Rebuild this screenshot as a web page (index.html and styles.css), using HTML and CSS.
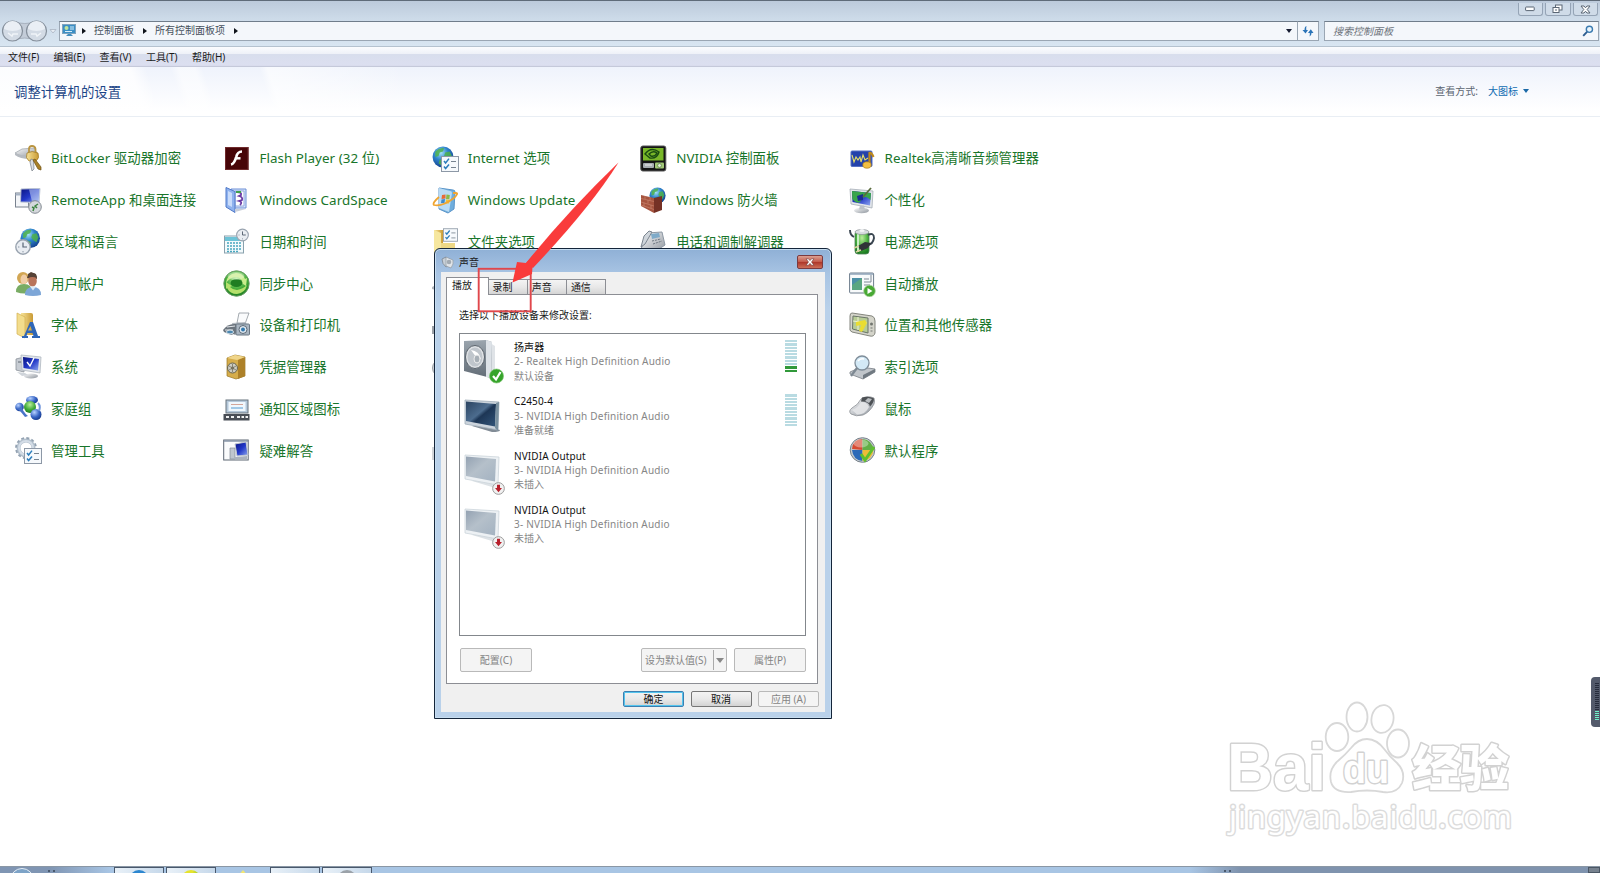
FILE: index.html
```html
<!DOCTYPE html>
<html lang="zh-CN">
<head>
    <meta charset="UTF-8">
    <meta name="viewport" content="width=device-width, initial-scale=1.0">
    <title>所有控制面板项</title>
    <link rel="stylesheet" href="styles.css">
</head>
<body>
    <!-- shared gradients and symbols -->
    <svg class="defs" width="0" height="0">
        <defs>
            <radialGradient id="globe" cx="40%" cy="30%" r="75%"><stop offset="0" stop-color="#a5e4f5"/><stop offset=".45" stop-color="#2e83cc"/><stop offset="1" stop-color="#123d8a"/></radialGradient>
            <linearGradient id="screen" x1="0" y1="0" x2="1" y2="1"><stop offset="0" stop-color="#0a1480"/><stop offset=".5" stop-color="#2238c8"/><stop offset="1" stop-color="#8fa8ee"/></linearGradient>
            <linearGradient id="metal" x1="0" y1="0" x2="1" y2="1"><stop offset="0" stop-color="#fdfdfe"/><stop offset="1" stop-color="#8d949c"/></linearGradient>
            <linearGradient id="gold" x1="0" y1="0" x2="1" y2="0"><stop offset="0" stop-color="#f7e49a"/><stop offset="1" stop-color="#c99a34"/></linearGradient>
            <radialGradient id="green" cx="50%" cy="30%" r="70%"><stop offset="0" stop-color="#b9ee9a"/><stop offset=".6" stop-color="#44ac3a"/><stop offset="1" stop-color="#1c7c22"/></radialGradient>
            <radialGradient id="blueball" cx="35%" cy="30%" r="75%"><stop offset="0" stop-color="#b7d2ff"/><stop offset=".6" stop-color="#3563c4"/><stop offset="1" stop-color="#173a8c"/></radialGradient>
            <linearGradient id="tvon" x1="0" y1="0" x2="1" y2="1"><stop offset="0" stop-color="#2b4461"/><stop offset=".45" stop-color="#4c6c8e"/><stop offset=".55" stop-color="#1d3655"/><stop offset="1" stop-color="#32557a"/></linearGradient>
            <linearGradient id="tvoff" x1="0" y1="0" x2="1" y2="1"><stop offset="0" stop-color="#94a2b2"/><stop offset=".45" stop-color="#b5c0ca"/><stop offset="1" stop-color="#a3b2c1"/></linearGradient>
            <linearGradient id="grey" x1="0" y1="0" x2="0" y2="1"><stop offset="0" stop-color="#9ba5ae"/><stop offset="1" stop-color="#626c76"/></linearGradient>
        </defs>
        <symbol id="s-globe" viewBox="0 0 20 20">
            <circle cx="10" cy="10" r="9.5" fill="url(#globe)"/>
            <path d="M3 5q4-4 8-3l-1 3-3 1-1 3-3 1zM12 6l4-1 2 4-2 5-3-2-2-3zM7 12l4 2-2 4-3-2z" fill="#4fb14a" opacity=".85"/>
        </symbol>
        <symbol id="s-clock" viewBox="0 0 16 16">
            <circle cx="8" cy="8" r="7.2" fill="#e9edf2" stroke="#99a3af" stroke-width="1.4"/>
            <path d="M8 3.6V8h4" fill="none" stroke="#596574" stroke-width="1.2"/>
            <path d="M8 12v1.4M3 8h1.4" stroke="#8b96a4"/>
        </symbol>
        <symbol id="s-list" viewBox="0 0 18 16">
            <rect x=".5" y=".5" width="17" height="15" fill="#f6f9fc" stroke="#8d98a6"/>
            <path d="M3 5l1.6 2L8 2.6M3 10.5l1.6 2L8 8.4" fill="none" stroke="#2c7dbb" stroke-width="1.5"/>
            <path d="M10 5.5h5M10 11.5h5" stroke="#76828f"/>
        </symbol>
        <symbol id="s-unplugged" viewBox="0 0 12 12">
            <circle cx="6" cy="6" r="5.4" fill="#f1f1f1" stroke="#999" stroke-width=".9"/>
            <path d="M4.6 2.6h2.8v3h1.8L6 9.4 2.8 5.6h1.8z" fill="#b8202c"/>
        </symbol>
    </svg>

    <div class="window">
        <div class="titlebar">
            <span class="win-btn"><svg width="10" height="6"><rect x=".6" y="1" width="8.6" height="3.6" rx=".6" fill="#fff" stroke="#5a6674"/></svg></span>
            <span class="win-btn"><svg width="11" height="10"><rect x="3.5" y="1" width="6.5" height="5" fill="#fff" stroke="#5a6674"/><rect x="1" y="3.5" width="6" height="5" fill="#fff" stroke="#5a6674"/><path d="M3 6h2" stroke="#5a6674"/></svg></span>
            <span class="win-btn"><svg width="11" height="9"><path d="M1 1h3l1.5 1.8L7 1h3L7.2 4.5 10 8H7L5.5 6.2 4 8H1l2.8-3.5z" fill="#fff" stroke="#5a6674"/></svg></span>
        </div>

        <div class="navbar">
            <svg class="nav-btns" width="57" height="24" viewBox="0 0 57 24">
                <path d="M13 2.5q12 4 23 0v19q-11-5-23 0z" fill="#c3ccd8" stroke="#a7b1be"/>
                <circle cx="12.5" cy="12" r="10" fill="#d3dbe5" stroke="#858f9b" stroke-width="1.2"/>
                <circle cx="36.5" cy="12" r="10" fill="#d3dbe5" stroke="#858f9b" stroke-width="1.2"/>
                <path d="M4 10a8.5 8 0 0 1 17 0q-8 4-17 0zM28 10a8.5 8 0 0 1 17 0q-8 4-17 0z" fill="#eaeff5"/>
                <path d="M8 14l4 3 1-2h5M41 14l-4 3-1-2h-5" fill="none" stroke="#f0f4f8" stroke-width="1.5"/>
                <path d="M50 10.5h6l-3 3.5z" fill="#e8eef5" stroke="#a9b4c2" stroke-width=".8"/>
            </svg>
            <div class="address">
                <svg class="cp-icon" width="14" height="13" viewBox="0 0 14 13"><rect x=".5" y=".5" width="13" height="9" fill="#3b8fc6" stroke="#7fa4bf"/><circle cx="4.5" cy="4" r="2" fill="#bfe49e"/><path d="M8 3h4M8 5h4M3 7.5h7" stroke="#d9effa"/><path d="M4 12l2-2h3l2 2z" fill="#418cbd"/></svg>
                <span class="tri"></span>
                <span class="crumb">控制面板</span>
                <span class="tri"></span>
                <span class="crumb">所有控制面板项</span>
                <span class="tri"></span>
                <span class="tri-down"></span>
            </div>
            <div class="refresh">
                <svg width="12" height="12" viewBox="0 0 12 12"><path d="M4.500 1Q2.500 1.500 2.500 5H.5L3.500 8.500 6 5H4.300Q4 3 4.500 1zM7.500 11.500Q9.500 11 9.500 8h2L8.800 4.200 6 8h1.800Q8 10 7.500 11.500z" fill="#2b74b8"/></svg>
            </div>
            <div class="search">
                <span>搜索控制面板</span>
                <svg width="12" height="12" viewBox="0 0 12 12"><circle cx="7.4" cy="4.3" r="3.1" fill="#e9f5fc" stroke="#3a7ab0" stroke-width="1.4"/><path d="M5 6.8L1.2 10.8" stroke="#2d5e91" stroke-width="1.9"/></svg>
            </div>
        </div>

        <div class="menubar">
            <span>文件(F)</span><span>编辑(E)</span><span>查看(V)</span><span>工具(T)</span><span>帮助(H)</span>
        </div>

        <div class="header">
            <h1>调整计算机的设置</h1>
            <div class="view-by">查看方式: <a>大图标</a><span class="tri-down"></span></div>
        </div>

        <div class="items">
            <!-- row 1 -->
            <div class="item">
                <svg viewBox="0 0 27 27"><path d="M0 8l7-4 12-1 3 5-7 4-10-1z" fill="url(#metal)" stroke="#9aa0a8" stroke-width=".7"/><path d="M0 8q8 3 15 4v2q-10 0-15-4z" fill="#b5bac0"/><path d="M14 8V4q0-3 3-3t3.500 3v4" fill="none" stroke="#b99440" stroke-width="1.800"/><path d="M12 8q5-3 11 0 2 5-2 8h-7q-4-3-2-8z" fill="url(#gold)" stroke="#9b7320" stroke-width=".7"/><path d="M16 14l-1 3 2 9 2-2-.5-9z" fill="#d9dde2" stroke="#777e86" stroke-width=".7"/><path d="M20 14l6 8v3l-3-1-5-9z" fill="#a98026" stroke="#6f5219" stroke-width=".7"/></svg>
                <span>BitLocker 驱动器加密</span>
            </div>
            <div class="item">
                <svg viewBox="0 0 27 27"><rect x="2" y="2" width="23.5" height="23" fill="#470508"/><rect x="2.5" y="2.5" width="22.5" height="22" fill="none" stroke="#6f2a2c"/><path d="M19 6.5q-4.500 0-5.800 5.500-2 7-5.200 7.500" fill="none" stroke="#fff" stroke-width="2.7"/><path d="M12.500 13.300h5" stroke="#fff" stroke-width="2.5"/></svg>
                <span>Flash Player (32 位)</span>
            </div>
            <div class="item">
                <svg viewBox="0 0 27 27"><use href="#s-globe" x="0" y="1" width="22" height="22"/><use href="#s-list" x="9" y="11" width="18" height="16"/></svg>
                <span>Internet 选项</span>
            </div>
            <div class="item">
                <svg viewBox="0 0 27 27"><rect x=".8" y="1" width="25" height="25" rx="2" fill="#151515" stroke="#555"/><rect x="3" y="3" width="20.5" height="12.5" fill="#79b729"/><path d="M5 9q6-8 14-2-2 7-9 6l-5-4zM9 9q4-4 8-1-2 4-6 3z" fill="none" stroke="#194b12" stroke-width="1.4"/><rect x="3" y="18" width="11" height="5" rx="1" fill="#a8adb2"/><path d="M5 20h7" stroke="#efefef"/><rect x="15" y="17.500" width="9" height="6" rx="1" fill="#a3c977"/><circle cx="19.500" cy="20.500" r="1.900" fill="#e8f0de" stroke="#4d743b" stroke-width=".7"/></svg>
                <span>NVIDIA 控制面板</span>
            </div>
            <div class="item">
                <svg viewBox="0 0 27 27"><rect x="2" y="6" width="21" height="15.5" rx="1" fill="#2342ab" stroke="#5671c4"/><path d="M3 10l2 7 2-5 2 3 2-3 1 5 2-7 2 5 3-2" fill="none" stroke="#e3dd69" stroke-width="1.1"/><path d="M20.500 19V8q2-1 4 4" fill="none" stroke="#c08a1c" stroke-width="2.2"/><ellipse cx="18" cy="20" rx="4.2" ry="3.2" fill="#f2bf43" stroke="#ad7d17" stroke-width=".7"/></svg>
                <span>Realtek高清晰音频管理器</span>
            </div>

            <!-- row 2 -->
            <div class="item">
                <svg viewBox="0 0 27 27"><rect x=".5" y="6" width="13" height="14" fill="#f3f5f8" stroke="#79828f"/><path d="M.5 7.500h12" stroke="#a7b3c4" stroke-width="2"/><path d="M6 2l19-.5-1 14L5.500 15z" fill="url(#screen)" stroke="#bcc5d4"/><path d="M14 2.500l11-.5-1 13-7-.5z" fill="#cbd8f5" opacity=".55"/><circle cx="20" cy="20" r="6.3" fill="#d5d8dc" stroke="#858c94"/><path d="M17 20l2 1-1 3M23 17l-3 2 2 2" fill="none" stroke="#3d8440" stroke-width="1.5"/></svg>
                <span>RemoteApp 和桌面连接</span>
            </div>
            <div class="item">
                <svg viewBox="0 0 27 27"><path d="M8 2h15v19H8z" fill="#d6e4fa" stroke="#6c8fd6"/><path d="M12 4h9v15h-9z" fill="#fff" stroke="#90a8de"/><path d="M14 5q5 0 4 3l-2 1q4 1 3 4l-3 1q4 1 1 4" fill="none" stroke="#6b3ba5" stroke-width="1.800"/><path d="M13 5h5" stroke="#3da04a" stroke-width="2"/><path d="M3 .5l9 4v21L3 20z" fill="#8fb2ee" stroke="#4f78c8"/><path d="M5 4l4 2v14l-4-2z" fill="#c9dcfb"/><path d="M12 22h11l-11 3z" fill="#c9cfda"/></svg>
                <span>Windows CardSpace</span>
            </div>
            <div class="item">
                <svg viewBox="0 0 27 27"><path d="M7 1l14 2q2 0 2 2l-1 17-6 4-9-4z" fill="#70aedd" stroke="#5b95c9"/><path d="M7 1l11 3q2 0 2 2l-3 19-10-4z" fill="#b9dbf4"/><path d="M10 8l3.500-.5v4l-4 .5z" fill="#e86a36"/><path d="M14.500 7.500l3.300.5-.5 4h-3.300z" fill="#8cb945"/><path d="M9.500 12.500l3.500-.5-.5 4H9z" fill="#3e8acb"/><path d="M14 12.500h3.500l-.5 4h-3.300z" fill="#efc53a"/><path d="M7 10q-7 6-5 8 8 2 20-7 5-5 2-5h-3" fill="none" stroke="#efa532" stroke-width="1.800"/></svg>
                <span>Windows Update</span>
            </div>
            <div class="item">
                <svg viewBox="0 0 27 27"><use href="#s-globe" x="9" y="0" width="17" height="17"/><path d="M1 8l13 3v15L1 19z" fill="#a6543f"/><path d="M14 11l8-2v14l-8 3z" fill="#753125"/><path d="M1 11.500l13 3M1 15l13 4M1 18l13 4.500M5 9v3M10 10v3.500M8 13v3.500M4 15.500v4M11 18v3.500" fill="none" stroke="#cc8974" stroke-width=".6"/></svg>
                <span>Windows 防火墙</span>
            </div>
            <div class="item">
                <svg viewBox="0 0 27 27"><path d="M1 2l23 2-1 17-21-4z" fill="#e2e6ea" stroke="#a7aeb7" stroke-width=".8"/><path d="M3 4l19 2-1 12.500L3.500 15z" fill="url(#screen)"/><path d="M3 4l19 2-.5 7q-6-6-9 0T3.300 12z" fill="#38a54a"/><path d="M8 9l6-2v6l-5 1z" fill="#1c2c93"/><path d="M22 1l-8 9" stroke="#5a6b3c" stroke-width="1.8"/><ellipse cx="12.5" cy="23.5" rx="7.5" ry="2.8" fill="url(#metal)"/><path d="M11 18.500h4l1 4h-6z" fill="#bcc2c9"/></svg>
                <span>个性化</span>
            </div>

            <!-- row 3 -->
            <div class="item">
                <svg viewBox="0 0 27 27"><use href="#s-globe" x="5" y="0" width="20.5" height="20.5"/><use href="#s-clock" x="0" y="11" width="16" height="16"/></svg>
                <span>区域和语言</span>
            </div>
            <div class="item">
                <svg viewBox="0 0 27 27"><rect x="1.5" y="8" width="19" height="17" fill="#f3fafc" stroke="#89a1ad"/><path d="M2 9h18v4H2z" fill="#6dc3d7"/><path d="M4 15h15M4 18h15M4 21h15M4 23.500h12" stroke="#48a7bf" stroke-width="1.6" stroke-dasharray="2 1"/><use href="#s-clock" x="13" y="0" width="13" height="14"/></svg>
                <span>日期和时间</span>
            </div>
            <div class="item">
                <svg viewBox="0 0 27 27"><path d="M2 2h9v25H2z" fill="url(#gold)"/><path d="M2 2l7 3v22H2z" fill="#f6e79f"/><use href="#s-list" x="11" y="0" width="15" height="14"/><path d="M9 15h14v11H9z" fill="#edd887"/></svg>
                <span>文件夹选项</span>
            </div>
            <div class="item">
                <svg viewBox="0 0 27 27"><path d="M7 5l15-1 3 13-12 8-12-4z" fill="url(#metal)" stroke="#8d98a4"/><path d="M11 6l8-1 1 4-8 2z" fill="#7fabc9"/><path d="M4 8l5-5 3 1-7 12-4 3z" fill="#cfd5db" stroke="#7b858f"/><path d="M12 13l9-2M13 16l9-3" stroke="#6e7882" stroke-dasharray="2 1"/></svg>
                <span>电话和调制解调器</span>
            </div>
            <div class="item">
                <svg viewBox="0 0 27 27"><rect x="6" y="3" width="14" height="23" rx="3" fill="url(#green)" stroke="#4e8455" stroke-width=".8"/><path d="M9 6v18" stroke="#c9efc5" stroke-width="2"/><ellipse cx="13" cy="4" rx="7" ry="2.5" fill="#d9dde0" stroke="#8c9296" stroke-width=".7"/><ellipse cx="13" cy="2.5" rx="2.5" ry="1.5" fill="#f2f4f5"/><path d="M1 2q0 5 4 7M19 7q6-3 6 3-1 6-6 7" fill="none" stroke="#394550" stroke-width="1.9"/><path d="M9 18l7-4 6 1-3 5-7 3z" fill="#303438"/><path d="M10 18l-5 2M12 22l-5 2" stroke="#d8d09d" stroke-width="1.5"/></svg>
                <span>电源选项</span>
            </div>

            <!-- row 4 -->
            <div class="item">
                <svg viewBox="0 0 27 27"><circle cx="8" cy="8" r="6" fill="#d2a654"/><ellipse cx="9" cy="9.5" rx="3.5" ry="5" fill="#f0cda6"/><path d="M1 22q0-8 8-8t8 8q-7 3-16 0z" fill="#79ac64"/><path d="M12 8q1-5 5.500-5T22 9z" fill="#5a4334"/><ellipse cx="17.5" cy="11" rx="4.3" ry="5.5" fill="#b9745a"/><path d="M13 8q4-2 9 0l-1-4-5-2-3 2z" fill="#564237"/><path d="M10 25q0-8 8-8 8 0 8 8-8 2-16 0z" fill="#7da6d7"/><path d="M15 16.500l3 4 3-4" fill="#dce9f6"/></svg>
                <span>用户帐户</span>
            </div>
            <div class="item">
                <svg viewBox="0 0 27 27"><circle cx="13.5" cy="13.5" r="12.7" fill="url(#green)" stroke="#6d9e68"/><path d="M3 13q1-9 10-10 7 0 9 6l2-1-1 8-6-4 2-1q-2-4-6-4-6 0-10 6z" fill="#c9ec8c"/><path d="M24 15q-2 8-10 9-7 0-10-6l-1 1v-7l6 4-2 1q3 3 7 3 6-1 10-5z" fill="#b5e06c"/><ellipse cx="13.5" cy="13" rx="6" ry="4" fill="#1f7d22"/><ellipse cx="13" cy="6" rx="8.500" ry="4" fill="#fff" opacity=".3"/></svg>
                <span>同步中心</span>
            </div>
            <div class="item"><svg viewBox="0 0 27 27"><path d="M0 17l8-4v8l-8-2z" fill="#b5b9be"/></svg></div>
            <div class="item"></div>
            <div class="item">
                <svg viewBox="0 0 27 27"><rect x=".6" y="3" width="24" height="20" rx="1" fill="#f8fafb" stroke="#6d7c8c"/><path d="M1 4h23" stroke="#8fa3b8" stroke-width="1.5"/><path d="M3 8h10v12H3z" fill="#4b8fa6"/><path d="M3 15l10-7v12H3z" fill="#5aa680"/><path d="M15 9h5M15 12h7M15 15h6M22 5v7" stroke="#7e8a96"/><circle cx="20.5" cy="21" r="5.8" fill="#48a934" stroke="#a6cf98" stroke-width=".7"/><path d="M18.500 18l5 3-5 3z" fill="#fff"/></svg>
                <span>自动播放</span>
            </div>

            <!-- row 5 -->
            <div class="item">
                <svg viewBox="0 0 27 27"><path d="M6 1h10q2 0 2 2v20H6z" fill="url(#gold)"/><path d="M2 1l8 4v21l-8-4z" fill="#f3dd8d" stroke="#d2b050" stroke-width=".7"/><path d="M7 26v-2h2l6-14h3l5 14h2v2h-8v-2h1.500l-1-3h-5l-1 3H13v2zM13 18.500h4L15.500 14z" fill="#2f66b7" fill-rule="evenodd"/></svg>
                <span>字体</span>
            </div>
            <div class="item">
                <svg viewBox="0 0 27 27"><path d="M14 11l2-10h10l-4 11z" fill="#fafbfc" stroke="#8e959c" stroke-width=".8"/><path d="M9 11l14-1 2 11-14 2z" fill="#b1b8bf"/><path d="M0 18q5-7 13-6l1 9-6 2-7-3z" fill="#6b747d"/><path d="M4 15l8-1M2 18h8" stroke="#e2e6ea"/><rect x="13" y="12" width="13.500" height="11" rx="1" fill="#a9b5c1" stroke="#6b7884"/><circle cx="20" cy="17.5" r="4" fill="#e0e9f1" stroke="#5d6a76"/><circle cx="20" cy="17.5" r="2" fill="#3279ae"/><ellipse cx="7" cy="20" rx="3.500" ry="2" fill="#4d88b0" stroke="#dfe6eb"/></svg>
                <span>设备和打印机</span>
            </div>
            <div class="item"><svg viewBox="0 0 27 27"><path d="M0 14h10v8H0z" fill="#9da2a8"/></svg></div>
            <div class="item"></div>
            <div class="item">
                <svg viewBox="0 0 27 27"><path d="M3 1l20 3q3 1 3 5v12q-1 4-5 3L3 20q-3-1-2-5V4q0-3 2-3z" fill="#d4d4ca" stroke="#84867e"/><path d="M4 4l15 2v15L3.500 17z" fill="#b7cc96" stroke="#6a7569"/><path d="M4 9l14 2M9 5v13" stroke="#eff3d5"/><path d="M7 10l9-2 2 3-5 9-3-1 2-6-5 1z" fill="#e9dd32"/><circle cx="22.5" cy="12" r="1.5" fill="#727670"/><path d="M21.500 16h2M21.500 19h2" stroke="#727670"/></svg>
                <span>位置和其他传感器</span>
            </div>

            <!-- row 6 -->
            <div class="item">
                <svg viewBox="0 0 27 27"><path d="M1 5l8-2v15l-8-2z" fill="#c7ccd3" stroke="#8b929b" stroke-width=".8"/><path d="M3 8h4" stroke="#5f6873"/><path d="M6 1l20 2-1 16-18-3z" fill="#e2e6eb" stroke="#b0b7c0" stroke-width=".8"/><path d="M8 3l16 2-1 11.500L8.500 14z" fill="url(#screen)"/><path d="M12 8l3 4 4-8" fill="none" stroke="#fff" stroke-width="1.4"/><ellipse cx="16" cy="22" rx="7" ry="2.5" fill="url(#metal)"/><path d="M2 18l8 1 3 2-6 1z" fill="#cfd4da"/></svg>
                <span>系统</span>
            </div>
            <div class="item">
                <svg viewBox="0 0 27 27"><path d="M4 4l8-3 10 2v19l-9 3-9-3z" fill="#d6ad4b" stroke="#9a7524" stroke-width=".7"/><path d="M15 6l7-3v19l-7 3z" fill="#ad8129"/><path d="M4 4l8-3 10 2-8 3z" fill="#f0d589"/><circle cx="9.5" cy="14" r="5" fill="#cbcbc3" stroke="#676451"/><circle cx="9.5" cy="14" r="1.6" fill="#625f51"/><path d="M9.500 10v8M6 12l7 4M6 16l7-4" stroke="#777361" stroke-width=".8"/></svg>
                <span>凭据管理器</span>
            </div>
            <div class="item"><svg viewBox="0 0 27 27"><circle cx="9" cy="14" r="8.500" fill="#d5d8db" stroke="#999fa5"/></svg></div>
            <div class="item"></div>
            <div class="item">
                <svg viewBox="0 0 27 27"><path d="M1 18l11-5 14 2v3l-12 7-13-5z" fill="#c0c5ca" stroke="#777e85" stroke-width=".8"/><path d="M14 21l12-6v3l-12 7z" fill="#707981"/><circle cx="13" cy="9" r="7" fill="#d3e9f6" stroke="#7f8d99" stroke-width="1.3"/><path d="M9 7q2-3 6-2" stroke="#fff" stroke-width="1.5" fill="none"/><path d="M8 14l-6 8" stroke="#7d8892" stroke-width="2.2"/></svg>
                <span>索引选项</span>
            </div>

            <!-- row 7 -->
            <div class="item">
                <svg viewBox="0 0 27 27"><ellipse cx="17" cy="5" rx="6" ry="4" fill="url(#blueball)"/><circle cx="4.5" cy="12" r="4.3" fill="url(#blueball)"/><path d="M3 14q4 4 7 8l3-1q-6-5-6-10z" fill="#4a74c8"/><circle cx="15" cy="12" r="6" fill="url(#green)"/><circle cx="21" cy="19.5" r="5.5" fill="url(#blueball)"/><path d="M23 8q3 3 1 8" stroke="#7196dc" stroke-width="2" fill="none"/></svg>
                <span>家庭组</span>
            </div>
            <div class="item">
                <svg viewBox="0 0 27 27"><rect x="3" y="5" width="22" height="13" fill="#b5c8da" stroke="#69747f"/><rect x="5.5" y="7" width="17" height="9" fill="#eff7fd"/><path d="M8 9.500h12" stroke="#d3a69a"/><path d="M8 13h12" stroke="#5599cf"/><rect x=".5" y="19" width="26" height="6.5" fill="#494e56"/><path d="M3 22h3M8 22h3M14 22h3M18.500 22h2.500M22.500 22h2.500" stroke="#f0f1f2" stroke-width="2.2"/></svg>
                <span>通知区域图标</span>
            </div>
            <div class="item"></div>
            <div class="item"></div>
            <div class="item">
                <svg viewBox="0 0 27 27"><path d="M12 4q6-4 13-1 1 3 0 6-4 8-11 11-7 2-12-1-3-3 1-6 6-3 9-9z" fill="url(#metal)" stroke="#8b8f94" stroke-width=".8"/><path d="M13 2.500q7-2 12 1 0 4-4 8-1-5-9-5z" fill="#4d5155"/><path d="M19 3l4 1-3 4-4-2z" fill="#b9bdc1"/><path d="M3 15q7-3 9-8 6 0 8 5-4 8-12 7.500z" fill="#e4e6e8" opacity=".9"/></svg>
                <span>鼠标</span>
            </div>

            <!-- row 8 -->
            <div class="item">
                <svg viewBox="0 0 27 27"><circle cx="11" cy="11" r="7.500" fill="none" stroke="#b3c0cd" stroke-width="4"/><circle cx="11" cy="11" r="10" fill="none" stroke="#93a2b2" stroke-width="1.800" stroke-dasharray="3 2.240"/><circle cx="11" cy="11" r="7" fill="none" stroke="#d4dde7" stroke-width="2"/><use href="#s-list" x="9" y="11" width="18" height="16"/></svg>
                <span>管理工具</span>
            </div>
            <div class="item">
                <svg viewBox="0 0 27 27"><rect x=".7" y="3" width="24.5" height="20" fill="#fafbfc" stroke="#5d6773"/><path d="M1 4h24" stroke="#8796a8" stroke-width="1.5"/><path d="M7 11h5v11H7z" fill="#bfc6ce" stroke="#838b95" stroke-width=".7"/><path d="M12 7l11-2 2 13-11 1z" fill="url(#screen)" stroke="#c1c8d1"/><path d="M12 20l12-1v3H10z" fill="#aab2bd"/></svg>
                <span>疑难解答</span>
            </div>
            <div class="item"><svg viewBox="0 0 27 27"><path d="M0 10h10v13H0z" fill="#d2d5d9"/></svg></div>
            <div class="item"></div>
            <div class="item">
                <svg viewBox="0 0 27 27"><circle cx="13.5" cy="13" r="12.3" fill="#c4cace" stroke="#77828b"/><path d="M13.500 13V2Q4 2 3 12z" fill="#d64a32"/><path d="M13.500 13V2q10 1 11 11z" fill="#62b046"/><path d="M13.500 13H3q1 10 10.500 11z" fill="#2c6ab8"/><path d="M13.500 13h11q-1 10-11 11z" fill="#eebd37"/><ellipse cx="12" cy="6.5" rx="7.5" ry="4" fill="#fff" opacity=".35"/><path d="M12 17l4 6 9-13" fill="none" stroke="#5fc02d" stroke-width="3"/></svg>
                <span>默认程序</span>
            </div>
        </div>
    </div>

    <!-- watermark -->
    <svg class="watermark" width="300" height="150" viewBox="0 0 300 150">
        <g fill="#fff" stroke="#d8d8d8" stroke-width="1.8">
            <ellipse cx="117" cy="37" rx="11.3" ry="14"/>
            <ellipse cx="137" cy="17" rx="10.5" ry="14.5"/>
            <ellipse cx="162.5" cy="19" rx="11" ry="14" transform="rotate(10 162.5 19)"/>
            <ellipse cx="178" cy="43.5" rx="11" ry="14"/>
            <path d="M147 39q10 0 18 11 5 7 12 13 9 9 5 20-5 11-19 9-16-3-32 0-17 1-20-10-3-13 8-22 6-5 12-12 7-9 16-9z"/>
        </g>
        <text class="wm-bai" x="7" y="90" textLength="99" lengthAdjust="spacingAndGlyphs">Bai</text>
        <text class="wm-du" x="123" y="83" textLength="46" lengthAdjust="spacingAndGlyphs">du</text>
        <text class="wm-cn" x="192" y="86" textLength="97">经验</text>
        <text class="wm-url" x="9" y="128" textLength="283">jingyan.baidu.com</text>
    </svg>

    <!-- sound dialog -->
    <div class="dialog">
        <div class="dialog-title">
            <svg width="14" height="14" viewBox="0 0 14 14"><path d="M1 4l4-2 3 8-3 2q-4-3-4-8z" fill="#c8cfd6" stroke="#7b8590" stroke-width=".8"/><path d="M5 2l7 3q1 4-2 8L5 11z" fill="#e1e5e9" stroke="#8e98a2" stroke-width=".7"/><circle cx="8" cy="7" r="2.3" fill="#a3abb3"/></svg>
            <span>声音</span>
            <span class="dialog-close"><svg width="10" height="8" viewBox="0 0 10 8"><path d="M1 .8h2.500L5 2.600 6.500.8H9L6.500 4 9 7.200H6.500L5 5.400 3.500 7.200H1L3.500 4z" fill="#fff" stroke="#6c3433" stroke-width=".6"/></svg></span>
        </div>
        <div class="dialog-body">
            <div class="tabs">
                <span class="tab active">播放</span><span class="tab">录制</span><span class="tab">声音</span><span class="tab">通信</span>
            </div>
            <div class="panel">
                <p class="hint">选择以下播放设备来修改设置:</p>
                <div class="devices">
                    <div class="device">
                        <svg width="44" height="46" viewBox="0 0 44 46"><path d="M27 5l5 3v28l-5 4z" fill="#dfe3e7"/><path d="M1 3l22-1 6 2-1 36L1 33z" fill="url(#grey)"/><path d="M23 2l6 2-1 36-5-1z" fill="#dde2e7"/><ellipse cx="12" cy="19" rx="9.5" ry="11.5" fill="#dfe2e5" stroke="#59626b"/><ellipse cx="12" cy="19" rx="7.5" ry="9.5" fill="#c0c6cc"/><path d="M8 12q8 1 10 9l-5-2z" fill="#fff"/><ellipse cx="14" cy="21" rx="3" ry="4" fill="#a8b0b7" stroke="#eee"/><circle cx="33.5" cy="38" r="7" fill="#36a42b" stroke="#7ac46d" stroke-width=".7"/><path d="M30 38l3 3.500 4.500-7.500" fill="none" stroke="#fff" stroke-width="2.2"/></svg>
                        <div class="device-text"><b>扬声器</b><span class="driver">2- Realtek High Definition Audio</span><span>默认设备</span></div>
                        <div class="meter"><i></i><i></i><i></i><i></i><i></i><i></i><i></i><i></i><i class="on"></i><i class="on"></i></div>
                    </div>
                    <div class="device">
                        <svg width="44" height="46" viewBox="0 0 44 46"><path d="M9 34l20 6q8 0 8-2L18 33z" fill="#818b95"/><path d="M2 8l34 2-1 28L2 32z" fill="#ccd4dc" stroke="#9fadb9" stroke-width=".8"/><path d="M3 9.500l30 2.500-1 22.500L3 29z" fill="url(#tvon)"/><path d="M33 11l3-1-1 29-3-3z" fill="#79909f"/></svg>
                        <div class="device-text"><b>C2450-4</b><span class="driver">3- NVIDIA High Definition Audio</span><span>准备就绪</span></div>
                        <div class="meter"><i></i><i></i><i></i><i></i><i></i><i></i><i></i><i></i><i></i><i></i></div>
                    </div>
                    <div class="device">
                        <svg width="44" height="46" viewBox="0 0 44 46"><path d="M9 34l20 6q8 0 8-2L18 33z" fill="#dde2e6"/><path d="M2 8l34 2-1 28L2 32z" fill="#edf1f4" stroke="#ccd4da" stroke-width=".8"/><path d="M3 9.500l30 2.500-1 22.500L3 29z" fill="url(#tvoff)"/><use href="#s-unplugged" x="29" y="35" width="13" height="13"/></svg>
                        <div class="device-text"><b>NVIDIA Output</b><span class="driver">3- NVIDIA High Definition Audio</span><span>未插入</span></div>
                    </div>
                    <div class="device">
                        <svg width="44" height="46" viewBox="0 0 44 46"><path d="M9 34l20 6q8 0 8-2L18 33z" fill="#dde2e6"/><path d="M2 8l34 2-1 28L2 32z" fill="#edf1f4" stroke="#ccd4da" stroke-width=".8"/><path d="M3 9.500l30 2.500-1 22.500L3 29z" fill="url(#tvoff)"/><use href="#s-unplugged" x="29" y="35" width="13" height="13"/></svg>
                        <div class="device-text"><b>NVIDIA Output</b><span class="driver">3- NVIDIA High Definition Audio</span><span>未插入</span></div>
                    </div>
                </div>
                <div class="panel-actions">
                    <span class="btn disabled">配置(C)</span>
                    <span class="btn disabled split">设为默认值(S)<span class="split-arrow"></span></span>
                    <span class="btn disabled">属性(P)</span>
                </div>
            </div>
            <div class="dialog-actions">
                <span class="btn primary">确定</span>
                <span class="btn">取消</span>
                <span class="btn disabled">应用 (A)</span>
            </div>
        </div>
    </div>

    <!-- red marker and arrow -->
    <svg class="marker" width="160" height="170" viewBox="470 150 160 170">
        <rect x="478.7" y="268.8" width="52" height="42.5" fill="none" stroke="#e0474c" stroke-width="1.9"/>
        <path d="M618.500 162.500L526 263l-9-1-4.500 20.500 19.500-8.500.5-7z" fill="#f93b3b"/>
        <path d="M618.500 162.500Q590 208 533 268l-7-5q42-52 92.500-100.500z" fill="#f93b3b"/>
    </svg>

    <div class="gadget"><i></i></div>

    <div class="taskbar">
        <span class="start-orb"></span>
        <span class="grip"></span>
        <span class="task"><i class="dot blue"></i></span>
        <span class="task"><i class="dot lime"></i></span>
        <span class="task plain"><i class="peak"></i></span>
        <span class="task"></span>
        <span class="task"><i class="dot grey"></i></span>
        <span class="tray"><i class="grip-mark"></i></span>
        <span class="show-desktop"></span>
    </div>
</body>
</html>
```

FILE: styles.css
```css
* {
    margin: 0;
    padding: 0;
    box-sizing: border-box;
}
body {
    width: 1600px;
    height: 873px;
    overflow: hidden;
    position: relative;
    background: #fff;
    font-family: 'Noto Sans', 'Noto Sans CJK SC', sans-serif;
    font-size: 10px;
    line-height: 14px;
    color: #1b1b1b;
}
.defs {
    position: absolute;
}
.window {
    height: 866px;
}

/* title bar */
.titlebar {
    height: 19px;
    padding: 2px 2px 0 0;
    border-top: 1px solid #5f6b79;
    background: linear-gradient(#bccadb, #cddbe9);
    display: flex;
    justify-content: flex-end;
    gap: 2px;
}
.win-btn {
    width: 25.5px;
    height: 13px;
    border: 1px solid #95a4b6;
    border-top: none;
    border-radius: 0 0 3px 3px;
    background: #cfdbe8;
    display: flex;
    align-items: center;
    justify-content: center;
}

/* address and search */
.navbar {
    height: 28px;
    background: linear-gradient(#cddbe9, #d8e5f1);
    border-bottom: 1px solid #b5c2cf;
    display: flex;
    align-items: center;
    padding-bottom: 4px;
}
.nav-btns {
    margin: 1px 2px 0 0;
}
.address, .refresh, .search {
    height: 20px;
    border: 1px solid #9aa6b3;
    border-top-color: #707d8b;
    background: #f4f7fb;
    display: flex;
    align-items: center;
}
.address {
    width: 1239px;
    padding: 0 5px 0 2px;
    color: #46505c;
}
.crumb {
    margin: 0 9px 1px 8px;
}
.cp-icon {
    margin-right: 6px;
}
.tri {
    border-left: 4px solid #10141a;
    border-top: 3px solid transparent;
    border-bottom: 3px solid transparent;
}
.tri-down {
    border-top: 4px solid #151b30;
    border-left: 3px solid transparent;
    border-right: 3px solid transparent;
    margin-left: auto;
}
.refresh {
    width: 21px;
    border-left: none;
    justify-content: center;
}
.search {
    width: 275px;
    margin-left: 5px;
    padding: 0 4px 0 8px;
    justify-content: space-between;
    color: #6e747b;
    font-style: italic;
}

/* menu */
.menubar {
    height: 20px;
    padding-left: 8px;
    display: flex;
    align-items: center;
    gap: 14.4px;
    background: linear-gradient(#fbfcfe 0, #eef1f8 34%, #d8deed 36%, #dcdff0 92%, #c5c9da 96%);
}

/* page header */
.header {
    height: 50px;
    padding: 0 71px 2px 14px;
    display: flex;
    align-items: center;
    justify-content: space-between;
    background: linear-gradient(72deg, rgba(255,255,255,.8) 0 9%, transparent 10% 11.5%, rgba(255,255,255,.5) 12% 13%, transparent 13.500% 17%, rgba(255,255,255,.6) 17.500%, transparent 26%), linear-gradient(#eff3fc, #fff 90%);
    border-bottom: 1px solid #e9eef4;
}
.header h1 {
    font-size: 13.4px;
    font-weight: normal;
    color: #1c4587;
    padding-top: 2px;
}
.view-by {
    display: flex;
    align-items: center;
    color: #5a6470;
}
.view-by a {
    color: #0f6cb2;
    margin-left: 10px;
}
.view-by .tri-down {
    border-top-color: #1a69a7;
    margin-left: 5px;
}

/* control panel items */
.items {
    display: grid;
    grid-template-columns: repeat(5, 208.4px);
    grid-auto-rows: 41.75px;
    padding: 20.5px 0 0 15px;
}
.item {
    display: flex;
    align-items: center;
    gap: 9px;
    white-space: nowrap;
    font-size: 13.4px;
    letter-spacing: .06px;
    line-height: 20px;
    color: #18752a;
}
.item svg {
    width: 27px;
    height: 27px;
    flex: none;
}

/* dialog */
.dialog {
    position: absolute;
    left: 434px;
    top: 248px;
    width: 398px;
    height: 471px;
    padding: 0 6px 6px;
    border: 1px solid #14253a;
    border-radius: 6px 6px 0 0;
    background: linear-gradient(#8fb0d6, #a9c5e4 26px, #b9d1ea 60px);
    box-shadow: inset 0 0 0 1px #c7ddf0;
    display: flex;
    flex-direction: column;
}
.dialog-title {
    height: 23px;
    display: flex;
    align-items: center;
    gap: 4px;
    padding-top: 3px;
}
.dialog-close {
    width: 26px;
    height: 14px;
    margin: -1px 2px 0 auto;
    border: 1px solid #7b3a3f;
    border-radius: 2px;
    background: linear-gradient(#dba092, #c45a4b 48%, #ad3629 52%, #cc6e58);
    display: flex;
    align-items: center;
    justify-content: center;
}
.dialog-body {
    flex: 1;
    background: #f0f0f0;
    padding: 5px 7px 0 5px;
    display: flex;
    flex-direction: column;
}
.tabs {
    height: 18px;
    display: flex;
    align-items: flex-end;
    position: relative;
    margin-bottom: -1px;
    z-index: 1;
}
.tab {
    width: 39.2px;
    height: 16px;
    padding-left: 4px;
    border: 1px solid #8c8e94;
    border-left: none;
    background: linear-gradient(#f4f4f4, #e8e8e8 50%, #d5d5d5);
}
.tab.active {
    width: 42.5px;
    height: 18px;
    padding: 0 0 0 5px;
    border-left: 1px solid #8c8e94;
    border-bottom: none;
    background: #fff;
}
.panel {
    height: 390px;
    border: 1px solid #8c8e94;
    background: #fff;
    padding: 13px 11px 0 12px;
}
.hint {
    height: 25px;
}
.devices {
    height: 303px;
    border: 1px solid #83878c;
    padding: 4px 8px 0 3px;
}
.device {
    height: 54.3px;
    display: flex;
}
.device svg {
    overflow: visible;
}
.device-text {
    display: flex;
    flex-direction: column;
    padding: 2px 0 0 7px;
    color: #868686;
    line-height: 14.3px;
}
.device-text b {
    font-weight: normal;
    letter-spacing: .12px;
    color: #111;
}
.driver {
    letter-spacing: .21px;
}
.meter {
    width: 12px;
    margin: 2px 0 0 auto;
}
.meter i {
    display: block;
    height: 2.3px;
    margin-bottom: 1px;
    background: #b9dbe2;
}
.meter .on {
    background: #31993a;
}
.panel-actions {
    display: flex;
    gap: 7px;
    padding: 12px 0 0 1px;
}
.panel-actions .btn {
    width: 72px;
    height: 24px;
}
.panel-actions .btn.split {
    width: 86px;
    margin-left: auto;
    padding-left: 3px;
    justify-content: flex-start;
}
.split-arrow {
    width: 13px;
    height: 20px;
    margin-left: auto;
    border-left: 1px solid #aaa;
    display: flex;
    align-items: center;
    justify-content: center;
}
.split-arrow::before {
    content: '';
    border-top: 5px solid #888;
    border-left: 4.5px solid transparent;
    border-right: 4.5px solid transparent;
}
.btn {
    width: 61px;
    height: 16px;
    border: 1px solid #777;
    border-radius: 2px;
    background: linear-gradient(#f3f3f3, #e9e9e9 50%, #d3d3d3);
    display: flex;
    align-items: center;
    justify-content: center;
    color: #111;
    white-space: nowrap;
}
.btn.primary {
    border-color: #3c7fb1;
    box-shadow: inset 0 0 0 1px #54c5ee;
}
.btn.disabled {
    border-color: #b9b9b9;
    background: #f4f4f4;
    color: #858585;
}
.dialog-actions {
    display: flex;
    justify-content: flex-end;
    gap: 6.5px;
    padding-top: 7px;
    margin-right: -1px;
}

/* overlays */
.marker {
    position: absolute;
    left: 470px;
    top: 150px;
    z-index: 2;
}
.watermark {
    position: absolute;
    left: 1220px;
    top: 700px;
}
.watermark text {
    fill: #fff;
    stroke: #d2d2d2;
    stroke-width: 3px;
    stroke-linejoin: round;
    paint-order: stroke;
    font-family: 'Liberation Sans', 'Noto Sans CJK SC', sans-serif;
}
.watermark .wm-bai {
    font-size: 66px;
    font-weight: bold;
}
.watermark .wm-du {
    font-size: 40px;
    font-weight: bold;
}
.watermark .wm-cn {
    font-size: 49px;
    font-weight: 900;
}
.watermark .wm-url {
    font-family: 'Noto Sans', sans-serif;
    font-size: 31px;
    stroke: #dcdcdc;
}
.gadget {
    position: absolute;
    right: 0;
    top: 677px;
    width: 9px;
    height: 50px;
    padding: 6px 1px 0 4px;
    border-radius: 4px 0 0 4px;
    background: #535a6b;
}
.gadget i {
    display: block;
    height: 38px;
    background: repeating-linear-gradient(transparent 0 1px, #535a6b 1px 2px), linear-gradient(#262c3c 0 72%, #6ff0c8 72%);
}

/* taskbar */
.taskbar {
    height: 7px;
    overflow: hidden;
    display: flex;
    gap: 2px;
    border-top: 1px solid #8a97a5;
    background: linear-gradient(90deg, #7f95b3 0, #7f95b3 50px, #a8c5e4 110px, #a8c5e4 1190px, #7f93ae 1240px, #7f93ae);
}
.start-orb {
    width: 24px;
    height: 24px;
    margin: 1px 0 0 10px;
    border: 1px solid #e5edf5;
    border-radius: 50%;
    background: #7da3c7;
    flex: none;
}
.grip {
    width: 7px;
    margin: 3px 57px 0 12px;
    border-top: 2px dotted #4b5a6e;
}
.task {
    width: 50px;
    border: 1px solid #49586c;
    border-bottom: none;
    background: linear-gradient(90deg, #e9f1f8, #c6d8ea);
    display: flex;
    justify-content: center;
}
.task.plain {
    border: none;
    background: none;
}
.dot {
    width: 20px;
    height: 20px;
    margin-top: 2px;
    border-radius: 50%;
    flex: none;
}
.dot.blue {
    background: #2c86cf;
}
.dot.lime {
    background: linear-gradient(100deg, #e6e32c 50%, #5ab52f);
}
.dot.grey {
    background: #9ba2a9;
}
.peak {
    margin-top: 3px;
    border-bottom: 6px solid #f3e673;
    border-left: 5px solid transparent;
    border-right: 5px solid transparent;
    height: 0;
}
.tray {
    flex: 1;
    padding: 3px 0 0 850px;
}
.grip-mark {
    display: block;
    width: 7px;
    border-top: 2px dotted #4b5a6e;
}
.show-desktop {
    width: 12px;
    border: 1px solid #4b5765;
    background: #77828f;
}
```
